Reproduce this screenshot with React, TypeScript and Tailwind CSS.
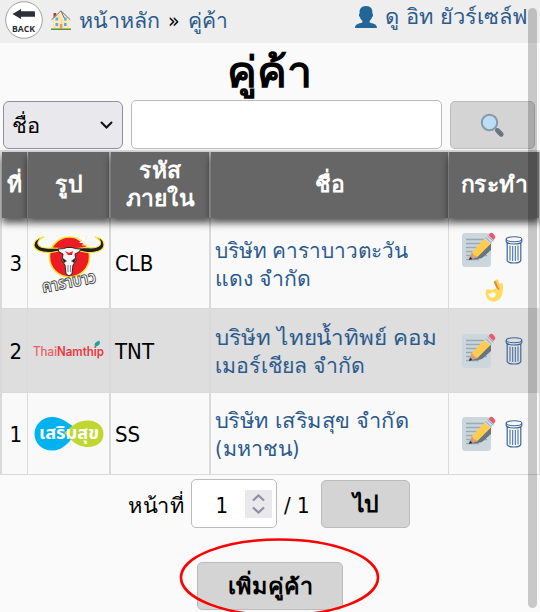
import React from "react";

const LINK = "text-[#2b5a8c]";

function BackButton() {
  return (
    <svg width="38" height="38" viewBox="0 0 38 38" className="shrink-0">
      <circle cx="19" cy="19" r="18.3" fill="#fff" stroke="#a2a2a2" strokeWidth="1" />
      <path d="M7.5 13 L16 8 V10.3 H29 Q30 10.3 30 11.3 V15.8 H16 V18 Z" fill="#2b3138" />
      <text x="7" y="31" fontSize="9.6" fontWeight="700" fontFamily="'Open Sans', sans-serif" textLength="23" lengthAdjust="spacingAndGlyphs" fill="#2b3138">BACK</text>
    </svg>
  );
}

function House() {
  return (
    <svg width="20" height="21" viewBox="0 0 20 21" className="shrink-0">
      <path d="M2.500 3h2.700v5H2.500z" fill="#a83b4b" />
      <path d="M1.500 9.500 L6.500 4 L10 .8 L18.500 9.500 V19 H1.500Z" fill="#ffe8b6" />
      <path d="M1 9.800 L5.800 4.500 L10.500 9.800 V18" fill="none" stroke="#e6cf9d" strokeWidth=".8" />
      <path d="M.5 9.800 L10 .8 L19.300 9.800M10 1 L14 9.500" fill="none" stroke="#66757f" strokeWidth="1" />
      <path d="M4.500 7.500h2.600v3H4.500zM4.500 13h2.600v3H4.500zM13 7.500h2.600v3H13zM13 13h2.600v3H13z" fill="#55acee" />
      <path d="M8.800 14h2.600v4.500H8.800z" fill="#d9a06b" />
      <path d="M0 18.500h20V20H0z" fill="#5c913b" />
    </svg>
  );
}

function Person() {
  return (
    <svg width="22" height="22" viewBox="0 0 36 36" className="shrink-0">
      <path d="M24 26.8v-2.6c2.2-1.6 3.4-4 4-6.6.8 0 1.5-1 1.500-2.600 0-1.400-.5-2.600-1.200-3C29.600 5 25.500 0 18 0S6.400 5 7.700 12c-.7.4-1.200 1.600-1.200 3 0 1.600.7 2.600 1.500 2.600.6 2.600 1.900 5 4 6.600v2.600C6 28.500 0 29.500 0 36h36c0-6.500-6-7.500-12-9.200z" fill="#226699" />
    </svg>
  );
}

function Magnifier() {
  return (
    <svg width="25" height="25" viewBox="0 0 25 25">
      <path d="M15 15l3 3" stroke="#9aaab4" strokeWidth="2.500" />
      <path d="M17.500 17.500l3.700 3.700" stroke="#66757f" strokeWidth="4.800" strokeLinecap="round" />
      <circle cx="9.500" cy="9.500" r="7.700" fill="#bbddf5" stroke="#8899a6" strokeWidth="2" />
    </svg>
  );
}

function Memo() {
  return (
    <svg width="34" height="36" viewBox="0 0 34 36" className="shrink-0">
      <rect x="0" y="1" width="29" height="34" rx="3.500" fill="#ccd6dd" />
      <path d="M4 7.500h21M4 11.500h21M4 15.500h21M4 19.500h18M4 23.500h21M4 27.500h13" stroke="#99aab5" strokeWidth="1.500" />
      <path d="M7 27.500 L27 13 L29 11 V18 L20 26 Q14 28 7 27.500Z" fill="#66757f" />
      <path d="M9.500 20.500 L23 6 L29 11.500 L15 25.500 Q10.500 25 9.500 20.500Z" fill="#ffcc4d" />
      <path d="M7 28 L9.300 20.500 Q12 21 12 23.500 Q15 23 15 25.500Z" fill="#d99e82" />
      <path d="M7 28 L8 24.500 L10.500 27Z" fill="#292f33" />
      <path d="M22 7 L26.500 2.500 L32 8 L28 12Z" fill="#ccd6dd" />
      <path d="M23.500 5.500l6 5.500M25.500 3.800l6 5.500" stroke="#99aab5" strokeWidth="1" />
      <path d="M26.500 3 L28 1.300 Q29.500 0 31.500 2 Q34 4.500 33 6 L31.500 8Z" fill="#ea596e" />
    </svg>
  );
}

function Trash() {
  return (
    <svg width="18" height="28" viewBox="0 0 18 28" fill="none" stroke="#3c699c" className="shrink-0">
      <ellipse cx="9" cy="3.300" rx="7.800" ry="2.500" strokeWidth="1.100" />
      <path d="M1.200 3.300v2.200Q2 8 9 8t7.800-2.500V3.300M2.200 7v17.500Q3 27 9 27t6.800-2.500V7" strokeWidth="1.200" />
      <path d="M5 9.500v15M7.700 10v15M10.300 10v15M13 9.500v15" strokeWidth="1" />
    </svg>
  );
}

function OkHand() {
  return (
    <svg width="19" height="24" viewBox="0 0 19 24">
      <path d="M11.800 2 Q14 6 15 13" fill="none" stroke="#ffcc4d" strokeWidth="2.800" strokeLinecap="round" />
      <path d="M16.500 5.500 Q17.300 10 15.500 16" fill="none" stroke="#ffdc5d" strokeWidth="2.800" strokeLinecap="round" />
      <path d="M9.800 3 L13.300 10.500" fill="none" stroke="#e4873b" strokeWidth="2" strokeLinecap="round" />
      <path fillRule="evenodd" d="M1 11.500 Q2 9 4.500 10.500 L7 11 Q11 8.500 14 11 L17.500 13 Q17 18 13.500 21 Q9 24 4.500 21.500 Q-.5 18 1 11.500Z M3.500 14 Q3 17.500 6 18.500 Q9.500 19.200 11 16 Q10.500 12.500 7 13.500 Q5.500 15.500 3.500 14Z" fill="#ffdc5d" />
    </svg>
  );
}

function Carabao() {
  return (
    <svg width="72" height="64" viewBox="0 0 72 64" className="mt-2.5">
      <circle cx="36.500" cy="21" r="20" fill="#ed1c24" stroke="#ffe32b" strokeWidth="1.500" />
      <path d="M11 1 Q0 3 1 10 Q3 17 18 16.500 L29 14.500 H44 L54 16.500 Q70 17 71 9 Q71 2 62 1 Q69 4 67 9 Q64 13 52 11.500 L44 12.500 H29 L20 12 Q6 13 5 8 Q4 4 11 1Z" fill="#211e1f" stroke="#ffe32b" strokeWidth="1.100" />
      <path d="M25 13 Q31 13 34 11.500 H39 Q42 13 48 13 L46 16 L42 18 L43 25 L40 29 L39 38 L36 40 L33 38 L32 29 L29 25 L30 18 L26 16Z" fill="#f5f5f5" stroke="#302425" strokeWidth="1" />
      <path d="M29.500 22l4 3-3 2zM42.500 22l-4 3 3 2zM35 29v7M37.500 29v7" fill="#1e1b1c" stroke="#555" strokeWidth=".7" />
      <path d="M32 15l4 2 4-2-1 4h-4z" fill="#ed1c24" />
      <path d="M46 7l4-3 1-4 1 4 4 2-4 1-1 4-1-4z" fill="#fff" />
      <path d="M44 3l12 7M54 0l-5 10" stroke="#e8e8e8" strokeWidth=".7" />
      <text x="10" y="57" transform="rotate(-11 10 57)" fontFamily="'Noto Sans Thai', 'Noto Sans', sans-serif" fontWeight="700" fontSize="18" textLength="55" lengthAdjust="spacingAndGlyphs" fill="#fafafa" stroke="#3a3a3a" strokeWidth=".9">คาราบาว</text>
    </svg>
  );
}

function ThaiNamthip() {
  return (
    <svg width="74" height="22" viewBox="0 0 74 22">
      <g fontFamily="Inter, sans-serif" fontSize="12.500">
        <text x="1" y="15.500" textLength="24" lengthAdjust="spacingAndGlyphs" fill="#e85d64" stroke="#e85d64" strokeWidth=".2">Thai</text>
        <text x="25" y="15.500" textLength="47" lengthAdjust="spacingAndGlyphs" fontWeight="600" fill="#ec3740">Namthip</text>
      </g>
      <path d="M63 6.500 Q61 2.500 67.500 .5 Q69 5.500 64 6.500Z" fill="#1aa39c" />
    </svg>
  );
}

function Sermsuk() {
  return (
    <svg width="70" height="36" viewBox="0 0 70 36">
      <path d="M18 1 C29 1 34 8 42 12 L36 25 C29 32 25 34.500 18 34.500 C8 34.500 .5 27 .5 18 S8 1 18 1Z" fill="#00b2ef" />
      <path d="M30 17 C38 10 43 4.500 54 4.500 C63 4.500 69.500 10 69.500 18 S63 31 54 31 C44 31 39 26 30 17Z" fill="#bfd730" />
      <text x="5" y="23" fontFamily="'Noto Sans Thai', 'Noto Sans', sans-serif" fontSize="17" fontWeight="700" textLength="60" lengthAdjust="spacingAndGlyphs" fill="#fff">เสริมสุข</text>
    </svg>
  );
}

const rows = [
  { id: 3, code: "CLB", name: [["บริษัท คาราบาวตะวัน", "scale-x-[0.99]"], ["แดง จำกัด", "scale-x-[1.01]"]], logo: <Carabao />, ok: true, cls: "h-[91px] bg-[#f9f9f9]" },
  { id: 2, code: "TNT", name: [["บริษัท ไทยน้ำทิพย์ คอม", "scale-x-[1.067]"], ["เมอร์เชียล จำกัด", "scale-x-[1.014]"]], logo: <ThaiNamthip />, ok: false, cls: "h-[84px] bg-[#dedede]" },
  { id: 1, code: "SS", name: [["บริษัท เสริมสุข จำกัด", "scale-x-[1.038]"], ["(มหาชน)", "scale-x-[1.02]"]], logo: <Sermsuk />, ok: false, cls: "h-[82px] bg-[#f9f9f9]" },
];

const COLS = "grid grid-cols-[26px_83px_100px_238px_91px]";
const TH = "flex items-center justify-center border-r border-[#ababab] bg-[#666] text-center shadow-[0_5px_7px_rgba(0,0,0,0.65)] *:scale-x-[1.04]";

export default function App() {
  return (
    <div lang="th" className="relative h-[612px] w-[540px] overflow-hidden bg-[#fafafa] font-['DejaVu_Sans_Condensed',sans-serif] text-[21px] leading-[28px] text-black">
      <header className="flex h-[43px] items-start justify-between bg-[#eee] pl-[5px] pt-px">
        <div className="flex items-center whitespace-pre">
          <BackButton />
          <span className="ml-2 mr-2"><House /></span>
          <span className={`mt-0.5 w-[89px] ${LINK}`}><span className="inline-block origin-left scale-x-[1.02]">หน้าหลัก</span></span>
          <span className="mt-0.5 w-5">»</span>
          <span className={`mt-0.5 ${LINK}`}>คู่ค้า</span>
        </div>
        <div className={`flex items-center pr-3 pt-0.5 ${LINK}`}>
          <span className="mr-3.5"><Person /></span>
          <span className="origin-right scale-x-[1.045]">ดู อิท ยัวร์เซล์ฟ</span>
        </div>
      </header>
      <h1 className="h-[57px] scale-x-[1.065] text-center text-[42px] leading-[60px] font-bold">คู่ค้า</h1>
      <div className="flex h-[50px] items-start gap-2 pl-[3px]">
        <div className="mt-px flex h-12 w-[120px] items-center justify-between rounded-[6px] border border-[#8f8f9d] bg-[#e9e9ed] pl-2 pr-[9px]">
          <span className="mt-0.5 origin-left scale-x-[1.04]">ชื่อ</span>
          <svg width="13" height="9" viewBox="0 0 13 9"><path d="M1.500 1.500l5 5 5-5" fill="none" stroke="#111" strokeWidth="2" strokeLinecap="round" /></svg>
        </div>
        <div className="h-[49px] w-[311px] rounded-[5px] border border-[#bbb] bg-white" />
        <div className="mt-px flex h-12 w-[85px] items-center justify-center rounded-[5px] border border-[#bbb] bg-[#d4d4d4]"><Magnifier /></div>
      </div>
      <main className="border-l-2 border-t-2 border-[#dadada]">
        <div className={`${COLS} relative h-[66px] text-[22px] font-bold text-white`}>
          <div className={TH}><span>ที่</span></div>
          <div className={`${TH} border-r-2`}><span>รูป</span></div>
          <div className={`${TH} border-r-2`}><span>รหัส<br />ภายใน</span></div>
          <div className={TH}><span>ชื่อ</span></div>
          <div className={TH}><span>กระทำ</span></div>
        </div>
        {rows.map((r) => (
          <div key={r.id} className={`${COLS} ${r.cls} border-b border-[#dadada] *:border-[#dadada]`}>
            <div className="flex items-center justify-end border-r pt-0.5 pr-[5px] text-[22px]">{r.id}</div>
            <div className="flex items-center justify-center border-r-2">{r.logo}</div>
            <div className="flex items-center border-r-2 pt-0.5 pl-1 text-[22px]">{r.code}</div>
            <div className={`flex flex-col items-start justify-center border-r pl-1 whitespace-nowrap ${r.ok ? "pt-1" : "pt-0.5"} ${LINK}`}>
              {r.name.map(([line, scale]) => <span key={line} className={`origin-left ${scale}`}>{line}</span>)}
            </div>
            <div className={`flex flex-col items-center justify-center gap-[11px] border-r ${r.ok ? "pt-[9px]" : ""}`}>
              <div className="flex items-center gap-[9px] pr-1"><Memo /><Trash /></div>
              {r.ok && <OkHand />}
            </div>
          </div>
        ))}
      </main>
      <div className="mt-1 flex h-[49px] items-center pl-[128px]">
        <span className="mt-1 w-[63px] whitespace-nowrap"><span className="inline-block origin-left scale-x-[1.04]">หน้าที่</span></span>
        <div className="flex h-[49px] w-[86px] items-center justify-end rounded-[5px] border border-[#bbb] bg-white pr-1">
          <span className="mt-1 mr-[17px] text-[22px]">1</span>
          <div className="flex h-7 w-[27px] items-center justify-center bg-[#e9e9ed]">
            <svg width="13" height="20" viewBox="0 0 13 20" fill="none" stroke="#8f8f9d" strokeWidth="2.200"><path d="M1 6.500l5.500-5 5.500 5M1 13.500l5.500 5 5.500-5" /></svg>
          </div>
        </div>
        <span className="mt-1 ml-[7px] w-[37px] text-[22px] whitespace-nowrap">/ 1</span>
        <div className="flex h-12 w-[89px] items-center justify-center rounded-[5px] border border-[#bbb] bg-[#d4d4d4] pt-0.5 text-[22px] font-bold"><span className="scale-x-[1.04]">ไป</span></div>
      </div>
      <div className="ml-[197px] mt-[34px] flex h-12 w-[146px] items-center justify-center rounded-[5px] border border-[#bbb] bg-[#d4d4d4] pt-0.5 text-[22px] font-bold"><span className="scale-x-[1.06]">เพิ่มคู่ค้า</span></div>
      <svg className="absolute left-[178px] top-[537px]" width="202" height="82" viewBox="0 0 202 82"><ellipse cx="101.500" cy="40.500" rx="98.500" ry="38" fill="none" stroke="#f00" strokeWidth="2.600" /></svg>
      <div className="absolute left-[528px] top-2 h-[600px] w-[9px] rounded-full bg-black/20" />
    </div>
  );
}
